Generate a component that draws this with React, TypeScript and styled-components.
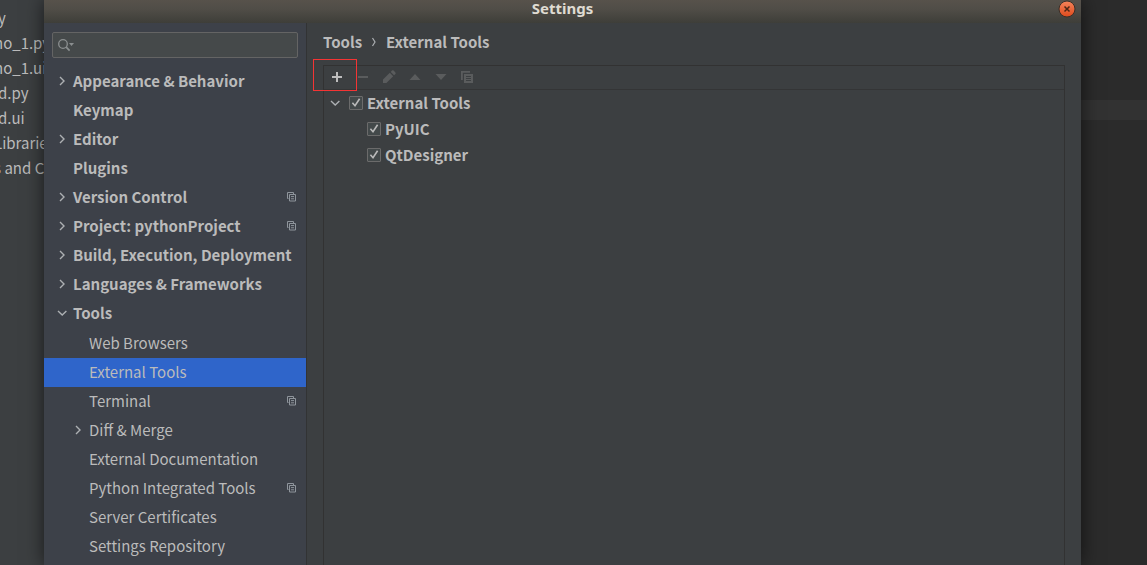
import React from "react";
import styled, { createGlobalStyle, css } from "styled-components";

const GlobalStyle = createGlobalStyle`
  * { box-sizing: border-box; }
  body {
    margin: 0;
    background: #2b2b2b;
    color: #bbbbbb;
    font-family: "Noto Sans CJK SC", "Noto Sans", sans-serif;
    font-size: 15px;
    line-height: 24px;
  }
  ul { list-style: none; margin: 0; padding: 0; }
`;

const Desktop = styled.div`
  display: grid;
  grid-template-columns: 44px minmax(0, 1fr) 66px;
  min-height: 100vh;
  overflow: hidden;
`;

const ProjectPane = styled.aside`
  overflow: hidden;
  padding-top: 5px;
  background: #3c3f41;
`;

const FileRow = styled.li<{ $clipped?: boolean }>`
  height: 25px;
  line-height: 25px;
  white-space: nowrap;
  margin-left: ${(p) => (p.$clipped ? "-6px" : "-2px")};
`;

const EditorPane = styled.div`
  padding-top: 100px;
  background: #2b2b2b;
`;

const CaretLine = styled.div`
  height: 20px;
  background: #323232;
`;

const Dialog = styled.section`
  z-index: 1;
  display: flex;
  flex-direction: column;
  background: #3c3f41;
  box-shadow: 0 0 18px rgba(0, 0, 0, 0.6);
`;

const TitleBar = styled.header`
  display: grid;
  grid-template-columns: 23px 1fr 23px;
  align-items: start;
  height: 23px;
  background: linear-gradient(#57524b, #504d47 40%, #3e3e39);
`;

const Title = styled.h1`
  grid-column: 2;
  margin: 0;
  text-align: center;
  font: bold 15px/16px "Noto Sans", "Open Sans", sans-serif;
  color: #dfdbd2;
`;

const CloseButton = styled.button`
  display: grid;
  width: 18px;
  height: 18px;
  padding: 0;
  border: 0;
  background: none;
`;

const Body = styled.div`
  flex: 1;
  display: grid;
  grid-template-columns: 263px minmax(0, 1fr);
`;

const Sidebar = styled.nav`
  background: #3d4149;
  border-right: 1px solid #323334;
`;

const SearchBox = styled.label`
  display: flex;
  align-items: center;
  height: 26px;
  margin: 9px 8px;
  padding-left: 5px;
  border: 1px solid #646464;
  border-radius: 2px;
  background: #45494a;
`;

const SearchInput = styled.input`
  flex: 1;
  min-width: 0;
  border: 0;
  outline: 0;
  background: none;
  color: inherit;
  font: inherit;
`;

const NavRow = styled.a<{ $level: number; $selected?: boolean }>`
  display: flex;
  align-items: center;
  gap: 5px;
  height: 29px;
  padding: 0 10px 2px ${(p) => 12 + p.$level * 16}px;
  color: #bbbbbb;
  font-weight: ${(p) => (p.$level === 0 ? "bold" : "normal")};
  text-decoration: none;
  white-space: nowrap;
  svg { flex: none; }
  ${(p) =>
    p.$selected &&
    css`
      background: #2f65ca;
    `}
`;

const NavLabel = styled.span`
  flex: 1;
`;

const SubList = styled.ul`
  padding-top: 1px;
`;

const Content = styled.main`
  display: flex;
  flex-direction: column;
  padding: 7px 16px 0;
`;

const Breadcrumb = styled.div`
  display: flex;
  align-items: center;
  gap: 9px;
  height: 24px;
  margin-bottom: 11px;
  font-weight: bold;
`;

const Panel = styled.div`
  position: relative;
  flex: 1;
  border: 1px solid #323232;
  border-bottom: 0;
`;

const Toolbar = styled.div`
  display: flex;
  gap: 2px;
  height: 24px;
  padding-left: 1px;
  border-bottom: 1px solid #343536;
`;

const ToolButton = styled.button`
  display: grid;
  place-items: center;
  width: 24px;
  height: 22px;
  padding: 0;
  border: 0;
  background: none;
  color: #bdbdbd;
  &:disabled { color: #5a5c5d; }
`;

const Highlight = styled.div`
  position: absolute;
  left: -11px;
  top: -7px;
  width: 44px;
  height: 32px;
  border: 1px solid #f43434;
  pointer-events: none;
`;

const ToolRow = styled.li<{ $level: number }>`
  display: flex;
  align-items: center;
  gap: 8px;
  height: 26px;
  padding-left: ${(p) => (p.$level === 0 ? 5 : 43)}px;
  font-weight: bold;
`;

const CheckLabel = styled.label`
  display: flex;
  align-items: center;
  gap: 4px;
`;

const CheckHolder = styled.span`
  display: grid;
  width: 14px;
  height: 14px;
  margin-bottom: 1px;
  > * { grid-area: 1 / 1; }
  svg { visibility: hidden; pointer-events: none; }
  input:checked + svg { visibility: visible; }
`;

const CheckInput = styled.input`
  appearance: none;
  width: 14px;
  height: 14px;
  margin: 0;
  border: 1px solid #6b6b6b;
  border-radius: 1px;
  background: #43494a;
`;

const Blank = styled.span`
  width: 12px;
`;

function Chevron({ open }: { open?: boolean }) {
  return (
    <svg width="12" height="12" viewBox="0 0 12 12" fill="none" stroke="#adb0b3" strokeWidth="1.4">
      <path d={open ? "M2 4l4.2 4 4.2-4" : "M4 2l4 4-4 4"} />
    </svg>
  );
}

function ProjectLevelIcon() {
  return (
    <svg width="10" height="10" viewBox="0 0 10 10" fill="none" stroke="#8f959c">
      <path d="M2.5 6.5h-1v-6h6v2" />
      <path d="M3.5 2.5h6v6.500h-6zM5 4.600h3M5 6.800h3" />
    </svg>
  );
}

function Check({ label }: { label: string }) {
  return (
    <CheckLabel>
      <CheckHolder>
        <CheckInput type="checkbox" defaultChecked />
        <svg width="14" height="14" viewBox="0 0 14 14" fill="none" stroke="#bbbbbb" strokeWidth="1.6">
          <path d="M3.4 6.8L6 9.8l4.6-7" />
        </svg>
      </CheckHolder>
      {label}
    </CheckLabel>
  );
}

type Item = { label: string; expand?: boolean; open?: boolean; shared?: boolean; selected?: boolean; children?: Item[] };

const files: { name: string; clipped?: boolean }[] = [
  { name: "y" },
  { name: "no_1.py", clipped: true },
  { name: "no_1.ui", clipped: true },
  { name: "d.py" },
  { name: "d.ui" },
  { name: "Libraries", clipped: true },
  { name: "s and C", clipped: true },
];

const pages: Item[] = [
  { label: "Appearance & Behavior", expand: true },
  { label: "Keymap" },
  { label: "Editor", expand: true },
  { label: "Plugins" },
  { label: "Version Control", expand: true, shared: true },
  { label: "Project: pythonProject", expand: true, shared: true },
  { label: "Build, Execution, Deployment", expand: true },
  { label: "Languages & Frameworks", expand: true },
  {
    label: "Tools",
    expand: true,
    open: true,
    children: [
      { label: "Web Browsers" },
      { label: "External Tools", selected: true },
      { label: "Terminal", shared: true },
      { label: "Diff & Merge", expand: true },
      { label: "External Documentation" },
      { label: "Python Integrated Tools", shared: true },
      { label: "Server Certificates" },
      { label: "Settings Repository" },
    ],
  },
];

function NavItem({ item, level }: { item: Item; level: number }) {
  return (
    <li>
      <NavRow href="#" $level={level} $selected={item.selected}>
        {item.expand ? <Chevron open={item.open} /> : <Blank />}
        <NavLabel>{item.label}</NavLabel>
        {item.shared && <ProjectLevelIcon />}
      </NavRow>
      {item.children && (
        <SubList>
          {item.children.map((child) => (
            <NavItem key={child.label} item={child} level={level + 1} />
          ))}
        </SubList>
      )}
    </li>
  );
}

export default function App() {
  return (
    <>
      <GlobalStyle />
      <Desktop>
        <ProjectPane>
          <ul>
            {files.map((f) => (
              <FileRow key={f.name} $clipped={f.clipped}>{f.name}</FileRow>
            ))}
          </ul>
        </ProjectPane>

        <Dialog>
          <TitleBar>
            <Title>Settings</Title>
            <CloseButton aria-label="Close">
              <svg width="18" height="18" viewBox="0 0 18 18">
                <defs>
                  <linearGradient id="close" x1="0" y1="0" x2="0" y2="1">
                    <stop offset="0" stopColor="#f4845b" />
                    <stop offset="1" stopColor="#de4a1c" />
                  </linearGradient>
                </defs>
                <circle cx="9" cy="9" r="8" fill="url(#close)" stroke="#3a2f28" />
                <path d="M6.5 6.5l5 5m0-5l-5 5" stroke="#4a2616" strokeWidth="1.5" />
              </svg>
            </CloseButton>
          </TitleBar>

          <Body>
            <Sidebar>
              <SearchBox>
                <svg width="18" height="14" viewBox="0 0 18 14" fill="none" stroke="#8b8f90" strokeWidth="1.3">
                  <circle cx="5" cy="6" r="4.3" />
                  <path d="M8.2 9.2l3.4 3.4" strokeWidth="1.7" />
                  <path d="M11 5h5l-2.5 3z" fill="#8b8f90" stroke="none" />
                </svg>
                <SearchInput type="text" aria-label="Search settings" />
              </SearchBox>
              <ul>
                {pages.map((p) => (
                  <NavItem key={p.label} item={p} level={0} />
                ))}
              </ul>
            </Sidebar>

            <Content>
              <Breadcrumb>
                <span>Tools</span>
                <svg width="6" height="12" viewBox="0 0 6 12" fill="none" stroke="#adb0b3" strokeWidth="1.2">
                  <path d="M1.5 2l2.5 4-2.5 4" />
                </svg>
                <span>External Tools</span>
              </Breadcrumb>
              <Panel>
                <Toolbar>
                  <ToolButton aria-label="Add">
                    <svg width="16" height="16" viewBox="0 0 16 16" stroke="currentColor" strokeWidth="2">
                      <path d="M8 3v10M3 8h10" />
                    </svg>
                  </ToolButton>
                  <ToolButton aria-label="Remove" disabled>
                    <svg width="16" height="16" viewBox="0 0 16 16" stroke="currentColor" strokeWidth="2">
                      <path d="M3 8h10" />
                    </svg>
                  </ToolButton>
                  <ToolButton aria-label="Edit" disabled>
                    <svg width="16" height="16" viewBox="0 0 16 16" fill="currentColor">
                      <path d="M2 14v-3.4l6.8-6.8 3.4 3.4L5.4 14zM9.7 2.9l1.3-1.3q.8-.6 1.6 0l1.8 1.8q.6.8 0 1.6l-1.3 1.3z" />
                    </svg>
                  </ToolButton>
                  <ToolButton aria-label="Move up" disabled>
                    <svg width="16" height="16" viewBox="0 0 16 16" fill="currentColor">
                      <path d="M2.5 11h11L8 5z" />
                    </svg>
                  </ToolButton>
                  <ToolButton aria-label="Move down" disabled>
                    <svg width="16" height="16" viewBox="0 0 16 16" fill="currentColor">
                      <path d="M2.5 5h11L8 11z" />
                    </svg>
                  </ToolButton>
                  <ToolButton aria-label="Copy" disabled>
                    <svg width="16" height="16" viewBox="0 0 16 16" fill="currentColor">
                      <path d="M2 2h9v1.8H3.8V11H2z" />
                      <path fillRule="evenodd" d="M5 5h9v9H5zM7 7v1h5V7zm0 2v1h5V9zm0 2v1h5v-1z" />
                    </svg>
                  </ToolButton>
                </Toolbar>
                <Highlight />
                <ul>
                  <ToolRow $level={0}>
                    <Chevron open />
                    <Check label="External Tools" />
                  </ToolRow>
                  <ToolRow $level={1}><Check label="PyUIC" /></ToolRow>
                  <ToolRow $level={1}><Check label="QtDesigner" /></ToolRow>
                </ul>
              </Panel>
            </Content>
          </Body>
        </Dialog>

        <EditorPane>
          <CaretLine />
        </EditorPane>
      </Desktop>
    </>
  );
}
